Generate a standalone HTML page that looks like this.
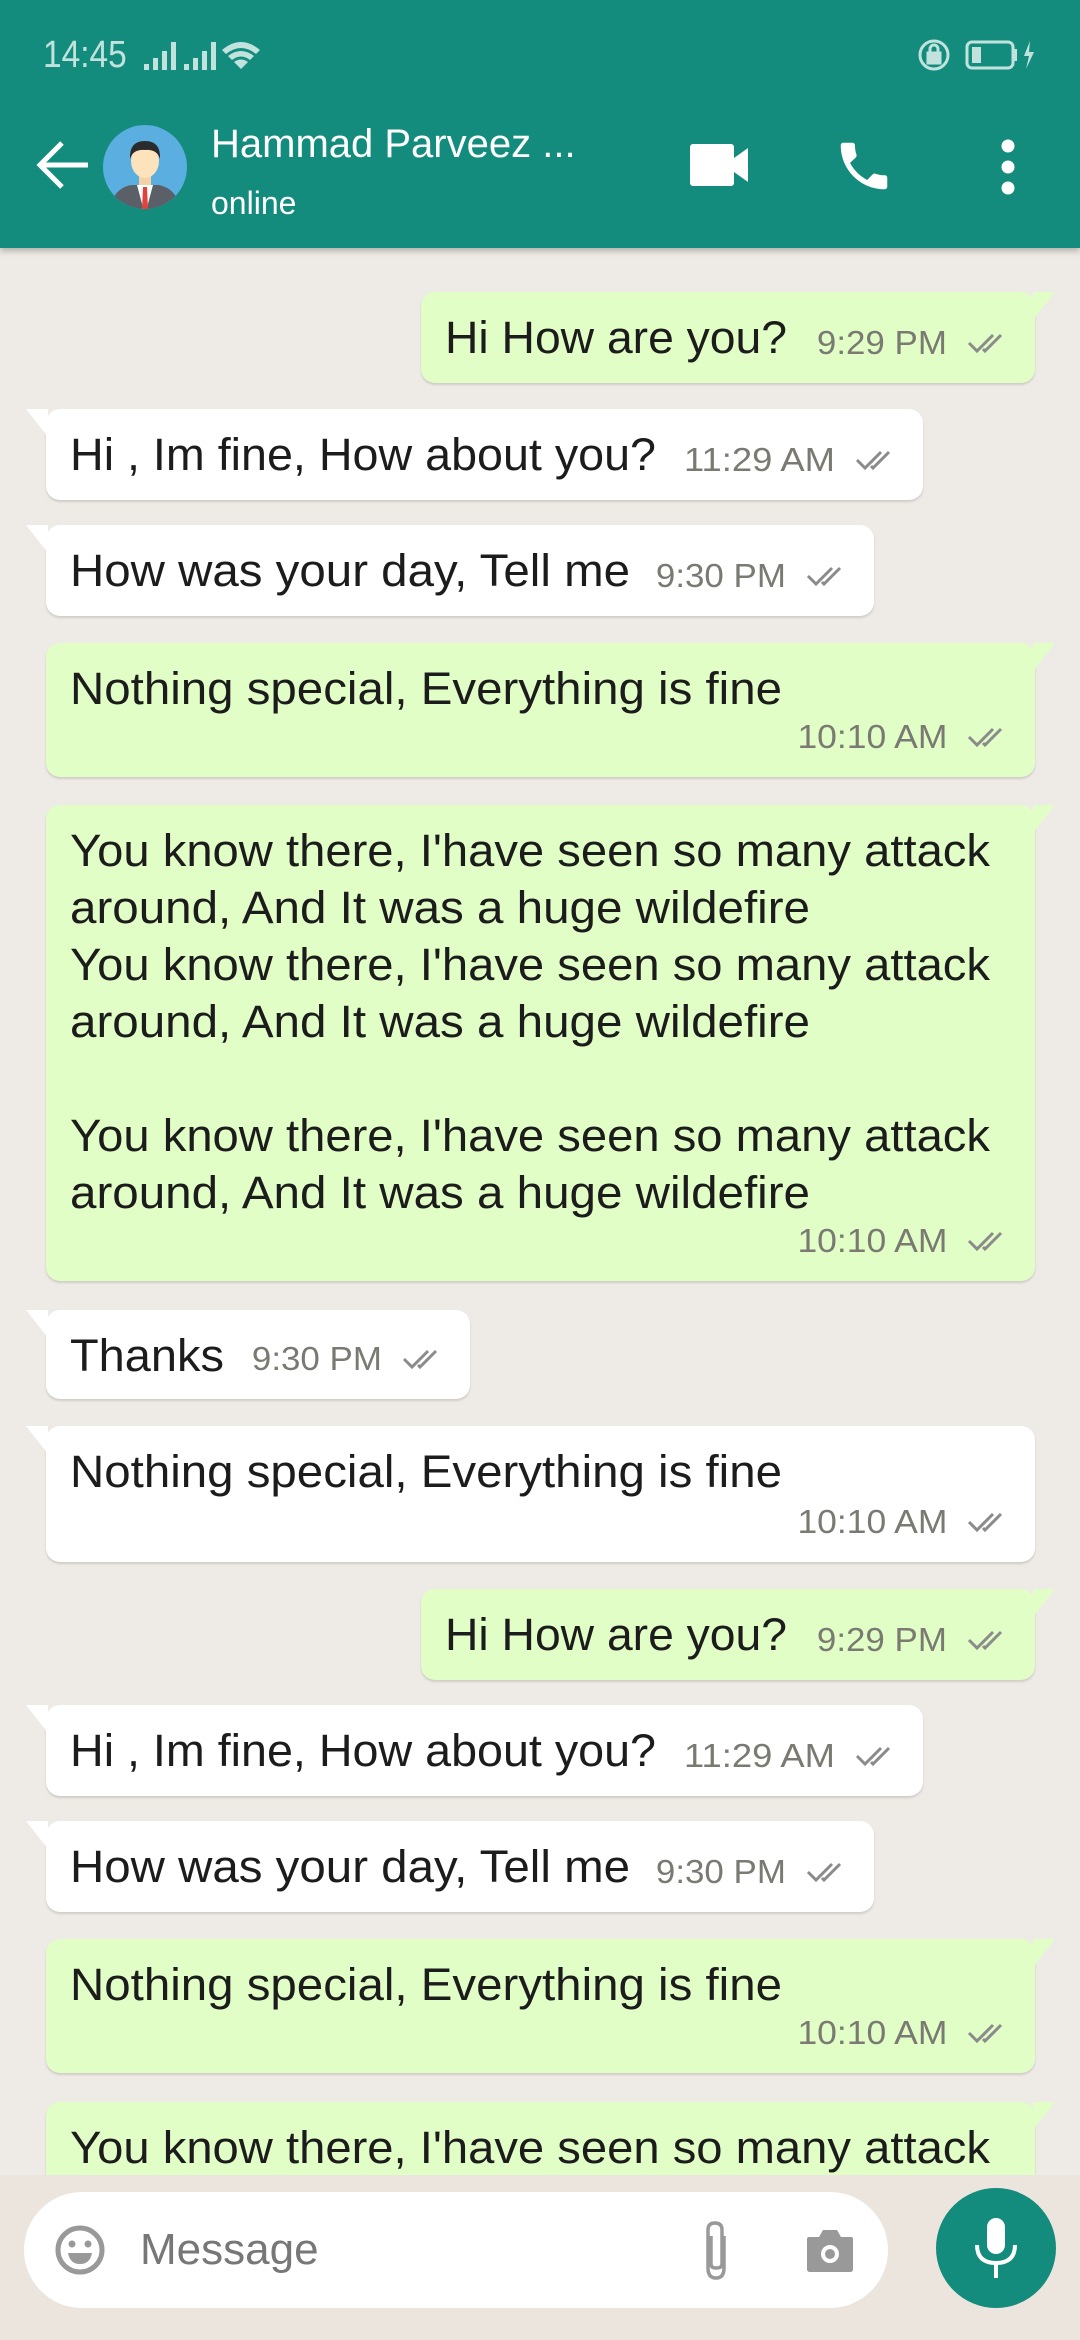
<!DOCTYPE html>
<html><head><meta charset="utf-8">
<style>
*{margin:0;padding:0;box-sizing:border-box}
body{width:1080px;height:2340px;position:relative;overflow:hidden;background:#eeeae5;font-family:"Liberation Sans",sans-serif}
#hdr{position:absolute;left:0;top:0;width:1080px;height:248px;background:#138c7e;box-shadow:0 3px 6px rgba(0,0,0,.25);z-index:5}
.b{position:absolute;border-radius:14px;box-shadow:0 2px 2px rgba(0,0,0,.13)}
.o{background:#e1fec6}
.i{background:#fff}
.o:after{content:"";position:absolute;right:-20px;top:0;border-top:28px solid #e1fec6;border-right:22px solid transparent}
.i:after{content:"";position:absolute;left:-20px;top:0;border-top:28px solid #fff;border-left:22px solid transparent}
.t{position:absolute;left:24px;top:17px;font-size:45px;line-height:57px;color:#1c1c1c;white-space:nowrap;transform-origin:0 50%}
.tm{position:absolute;right:88px;bottom:22px;font-size:33px;line-height:36px;color:#7a7a72;white-space:nowrap;transform-origin:100% 50%}
.ck{position:absolute;right:24px;bottom:28px;width:44px;height:24px}
#bot{position:absolute;left:0;top:2175px;width:1080px;height:165px;background:#ebe5de}
</style></head><body>
<div id="hdr">
  <div style="position:absolute;left:43px;top:34px;font-size:38px;color:#c2e3dd;transform:scaleX(.88);transform-origin:0 0">14:45</div>
  <svg style="position:absolute;left:142px;top:38px" width="140" height="34" viewBox="0 0 140 34" fill="#c2e3dd">
    <rect x="2" y="26" width="5" height="6"/><rect x="11" y="20" width="5" height="12"/><rect x="20" y="13" width="5" height="19"/><rect x="29" y="4" width="5" height="28"/>
    <rect x="42" y="26" width="5" height="6"/><rect x="51" y="20" width="5" height="12"/><rect x="60" y="13" width="5" height="19"/><rect x="69" y="4" width="5" height="28"/>
    <path d="M80 12 Q99 -4 118 12 L114 16 Q99 4 84 16Z M86 18 Q99 8 112 18 L108 22 Q99 15 90 22Z M92 24 Q99 19 106 24 L99 31Z"/>
  </svg>
  <svg style="position:absolute;left:918px;top:37px" width="126" height="36" viewBox="0 0 126 36" fill="none" stroke="#c2e3dd" stroke-width="3">
    <circle cx="16" cy="18" r="14"/><rect x="10" y="16" width="12" height="10" fill="#c2e3dd"/><path d="M12 16v-4a4 4 0 0 1 8 0v4"/>
    <rect x="49" y="5" width="46" height="26" rx="5"/><rect x="54" y="10" width="9" height="16" fill="#c2e3dd" stroke="none"/><rect x="96" y="12" width="3" height="12" fill="#c2e3dd" stroke="none"/>
    <path d="M112 4 L106 19 L111 19 L108 32 L116 15 L111 15Z" fill="#c2e3dd" stroke="none"/>
  </svg>
  <svg style="position:absolute;left:34px;top:138px" width="58" height="54" viewBox="0 0 58 54"><path d="M54 27H8 M28 5 L6 27 L28 49" stroke="#fff" stroke-width="5" fill="none"/></svg>
  <svg style="position:absolute;left:101px;top:123px" width="88" height="88" viewBox="0 0 88 88">
    <defs><clipPath id="c"><circle cx="44" cy="44" r="42"/></clipPath></defs>
    <circle cx="44" cy="44" r="42" fill="#5aaee0"/>
    <g clip-path="url(#c)">
      <path d="M8 92 Q10 66 30 62 L58 62 Q78 66 80 92Z" fill="#5b6068"/>
      <path d="M36 62 L44 92 L52 62Z" fill="#fff"/><path d="M42 64 L46 64 L47 86 L44 90 L41 86Z" fill="#e0443c"/>
      <rect x="38" y="48" width="12" height="14" fill="#f4d2a6"/>
      <ellipse cx="44" cy="38" rx="14" ry="17" fill="#fde3bc"/>
      <path d="M29 36 Q28 18 44 18 Q60 18 59 36 Q56 26 44 27 Q32 26 29 36Z" fill="#2b2b2e"/>
    </g>
  </svg>
  <div style="position:absolute;left:211px;top:122px;font-size:40px;color:#fff;white-space:nowrap">Hammad Parveez ...</div>
  <div style="position:absolute;left:211px;top:185px;font-size:32px;color:#fff">online</div>
  <svg style="position:absolute;left:690px;top:144px" width="62" height="42" viewBox="0 0 62 42" fill="#fff"><rect x="0" y="0" width="44" height="42" rx="3"/><path d="M44 14 L58 4 L58 38 L44 28Z"/></svg>
  <svg style="position:absolute;left:832px;top:135px" width="64" height="62" viewBox="0 0 24 24" fill="#fff"><path d="M6.6 10.8c1.4 2.8 3.8 5.1 6.6 6.6l2.2-2.2c.3-.3.7-.4 1-.2 1.1.4 2.3.6 3.6.6.6 0 1 .4 1 1V20c0 .6-.4 1-1 1C10.6 21 3 13.4 3 4c0-.6.4-1 1-1h3.5c.6 0 1 .4 1 1 0 1.3.2 2.5.6 3.6.1.3 0 .7-.2 1L6.6 10.8z"/></svg>
  <svg style="position:absolute;left:998px;top:138px" width="20" height="58" viewBox="0 0 20 58" fill="#fff"><circle cx="10" cy="8" r="6.5"/><circle cx="10" cy="29" r="6.5"/><circle cx="10" cy="50" r="6.5"/></svg>
</div>

<div class="b o" style="left:421px;top:292px;width:614px;height:91px"><div class="t" style="--w:342px">Hi How are you?</div><div class="tm" style="--w:130px">9:29 PM</div><svg class="ck" viewBox="0 0 44 24"><path d="M2 12 L10 20 L26 4 M16 18 L18 20 L34 4" stroke="#8b8b8b" stroke-width="3" fill="none"/></svg></div>

<div class="b i" style="left:46px;top:409px;width:877px;height:91px"><div class="t" style="--w:586px">Hi , Im fine, How about you?</div><div class="tm" style="--w:151px">11:29 AM</div><svg class="ck" viewBox="0 0 44 24"><path d="M2 12 L10 20 L26 4 M16 18 L18 20 L34 4" stroke="#8b8b8b" stroke-width="3" fill="none"/></svg></div>

<div class="b i" style="left:46px;top:525px;width:828px;height:91px"><div class="t" style="--w:560px">How was your day, Tell me</div><div class="tm" style="--w:130px">9:30 PM</div><svg class="ck" viewBox="0 0 44 24"><path d="M2 12 L10 20 L26 4 M16 18 L18 20 L34 4" stroke="#8b8b8b" stroke-width="3" fill="none"/></svg></div>

<div class="b o" style="left:46px;top:643px;width:989px;height:134px"><div class="t" style="--w:712px">Nothing special, Everything is fine</div><div class="tm" style="--w:150px">10:10 AM</div><svg class="ck" viewBox="0 0 44 24"><path d="M2 12 L10 20 L26 4 M16 18 L18 20 L34 4" stroke="#8b8b8b" stroke-width="3" fill="none"/></svg></div>

<div class="b o" style="left:46px;top:805px;width:989px;height:476px">
  <div class="t" style="--w:920px">You know there, I'have seen so many attack</div>
  <div class="t" style="--w:740px;top:74px">around, And It was a huge wildefire</div>
  <div class="t" style="--w:920px;top:131px">You know there, I'have seen so many attack</div>
  <div class="t" style="--w:740px;top:188px">around, And It was a huge wildefire</div>
  <div class="t" style="--w:920px;top:302px">You know there, I'have seen so many attack</div>
  <div class="t" style="--w:740px;top:359px">around, And It was a huge wildefire</div>
  <div class="tm" style="--w:150px">10:10 AM</div><svg class="ck" viewBox="0 0 44 24"><path d="M2 12 L10 20 L26 4 M16 18 L18 20 L34 4" stroke="#8b8b8b" stroke-width="3" fill="none"/></svg></div>

<div class="b i" style="left:46px;top:1310px;width:424px;height:89px"><div class="t" style="--w:154px">Thanks</div><div class="tm" style="--w:130px">9:30 PM</div><svg class="ck" viewBox="0 0 44 24"><path d="M2 12 L10 20 L26 4 M16 18 L18 20 L34 4" stroke="#8b8b8b" stroke-width="3" fill="none"/></svg></div>

<div class="b i" style="left:46px;top:1426px;width:989px;height:136px"><div class="t" style="--w:712px">Nothing special, Everything is fine</div><div class="tm" style="--w:150px">10:10 AM</div><svg class="ck" viewBox="0 0 44 24"><path d="M2 12 L10 20 L26 4 M16 18 L18 20 L34 4" stroke="#8b8b8b" stroke-width="3" fill="none"/></svg></div>

<div class="b o" style="left:421px;top:1589px;width:614px;height:91px"><div class="t" style="--w:342px">Hi How are you?</div><div class="tm" style="--w:130px">9:29 PM</div><svg class="ck" viewBox="0 0 44 24"><path d="M2 12 L10 20 L26 4 M16 18 L18 20 L34 4" stroke="#8b8b8b" stroke-width="3" fill="none"/></svg></div>

<div class="b i" style="left:46px;top:1705px;width:877px;height:91px"><div class="t" style="--w:586px">Hi , Im fine, How about you?</div><div class="tm" style="--w:151px">11:29 AM</div><svg class="ck" viewBox="0 0 44 24"><path d="M2 12 L10 20 L26 4 M16 18 L18 20 L34 4" stroke="#8b8b8b" stroke-width="3" fill="none"/></svg></div>

<div class="b i" style="left:46px;top:1821px;width:828px;height:91px"><div class="t" style="--w:560px">How was your day, Tell me</div><div class="tm" style="--w:130px">9:30 PM</div><svg class="ck" viewBox="0 0 44 24"><path d="M2 12 L10 20 L26 4 M16 18 L18 20 L34 4" stroke="#8b8b8b" stroke-width="3" fill="none"/></svg></div>

<div class="b o" style="left:46px;top:1939px;width:989px;height:134px"><div class="t" style="--w:712px">Nothing special, Everything is fine</div><div class="tm" style="--w:150px">10:10 AM</div><svg class="ck" viewBox="0 0 44 24"><path d="M2 12 L10 20 L26 4 M16 18 L18 20 L34 4" stroke="#8b8b8b" stroke-width="3" fill="none"/></svg></div>

<div class="b o" style="left:46px;top:2102px;width:989px;height:200px"><div class="t" style="--w:920px">You know there, I'have seen so many attack</div></div>

<div id="bot">
  <div style="position:absolute;left:24px;top:17px;width:864px;height:116px;border-radius:58px;background:#fff"></div>
  <svg style="position:absolute;left:54px;top:49px" width="52" height="52" viewBox="0 0 52 52"><circle cx="26" cy="26" r="22" stroke="#999" stroke-width="5" fill="none"/><circle cx="18" cy="20" r="3.5" fill="#999"/><circle cx="34" cy="20" r="3.5" fill="#999"/><path d="M14 29 H38 Q36 40 26 40 Q16 40 14 29Z" fill="#999"/></svg>
  <div style="position:absolute;left:140px;top:50px;font-size:44px;color:#777">Message</div>
  <svg style="position:absolute;left:700px;top:45px" width="32" height="62" viewBox="0 0 32 62"><path d="M24 16 V48 Q24 58 16 58 Q8 58 8 48 V10 Q8 3 15 3 Q22 3 22 10 V44 Q22 48 16 48 Q11 48 11 44 V16" stroke="#999" stroke-width="3.5" fill="none"/></svg>
  <svg style="position:absolute;left:805px;top:52px" width="50" height="46" viewBox="0 0 50 46"><path d="M4 10 H14 L18 3 H32 L36 10 H46 Q48 10 48 12 V42 Q48 45 45 45 H5 Q2 45 2 42 V12 Q2 10 4 10Z" fill="#999"/><circle cx="25" cy="27" r="9" fill="#fff"/><circle cx="25" cy="27" r="5" fill="#999"/></svg>
  <div style="position:absolute;left:936px;top:13px;width:120px;height:120px;border-radius:50%;background:#138c7e"></div>
  <svg style="position:absolute;left:970px;top:40px" width="52" height="66" viewBox="0 0 52 66"><rect x="17" y="3" width="18" height="36" rx="9" fill="#fff"/><path d="M7 30 Q7 48 26 48 Q45 48 45 30" stroke="#fff" stroke-width="4" fill="none"/><rect x="24" y="47" width="4" height="16" fill="#fff"/></svg>
</div>
<script>
document.querySelectorAll('.t,.tm').forEach(function(e){var w=parseFloat(getComputedStyle(e).getPropertyValue('--w'));var a=e.getBoundingClientRect().width;if(w&&a){e.style.transform='scaleX('+(w/a)+')';}});
</script>
</body></html>
